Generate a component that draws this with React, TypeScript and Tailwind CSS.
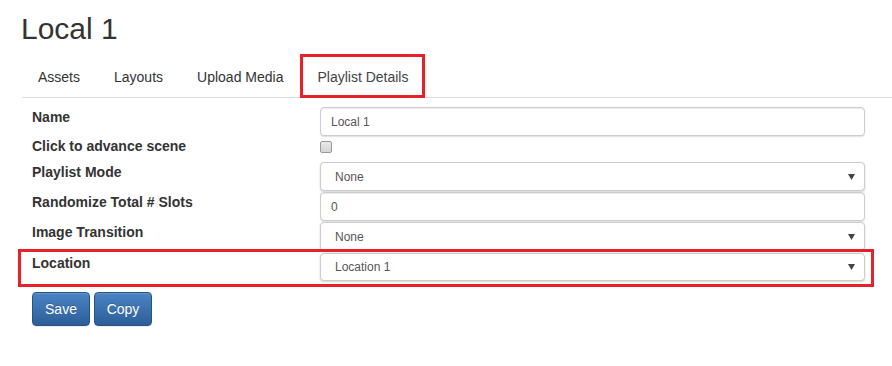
import React from "react";

const Arrow = () => (
  <svg width="7" height="6" viewBox="0 0 7 6" className="absolute right-[9px] top-1/2 -translate-y-1/2">
    <polygon points="0,0 7,0 3.5,6" fill="#444" />
  </svg>
);

const TextBox = ({ value }: { value: string }) => (
  <div className="h-full w-full rounded-[4px] border border-[#ccc] bg-white shadow-[inset_0_1px_1px_rgba(0,0,0,0.075),0_1px_1px_rgba(0,0,0,0.12)] flex items-center pl-[10px] text-[12px] text-[#555]">
    {value}
  </div>
);

const SelectBox = ({ value }: { value: string }) => (
  <div className="relative h-full w-full rounded-[4px] border border-[#ccc] bg-white shadow-[0_1px_2px_rgba(0,0,0,0.18)] flex items-center pl-[14px] text-[12px] text-[#555]">
    {value}
    <Arrow />
  </div>
);

const Row = ({
  label,
  h,
  children,
  extra,
}: {
  label: string;
  h: string;
  children: React.ReactNode;
  extra?: React.ReactNode;
}) => (
  <div className={`relative grid grid-cols-[288px_545px] ${h}`}>
    <div className="text-[14px] font-bold leading-[20px] text-[#333]">{label}</div>
    <div className="h-full">{children}</div>
    {extra}
  </div>
);

export default function App() {
  return (
    <div className="w-[892px] h-[366px] overflow-hidden bg-white font-['Liberation_Sans',Arial,sans-serif] text-[#333]">
      <div className="pl-[22px]">
        <h1 className="ml-[-1px] pt-[12px] text-[30px] leading-[33px] font-normal text-[#333]">Local 1</h1>
        <nav className="mt-[9px] flex items-end border-b border-[#ddd] text-[14px] leading-[20px] text-[#333]">
          <div className="px-[16px] py-[10px] mr-[2px]">Assets</div>
          <div className="px-[16px] py-[10px] mr-[2px]">Layouts</div>
          <div className="pl-[16px] pr-[17px] py-[10px]">Upload Media</div>
          <div className="mb-[-1px] border-[3px] border-[#e8202a] pl-[14px] pr-[14px] pt-[10px] pb-[8px] text-[#444]">
            Playlist Details
          </div>
        </nav>
        <div className="mt-[9px] pl-[10px] flex flex-col">
          <Row label="Name" h="h-[29px]">
            <TextBox value="Local 1" />
          </Row>
          <Row label="Click to advance scene" h="h-[26px]">
            <div className="mt-[5px] h-[12px] w-[12px] rounded-[2px] border border-[#999] bg-gradient-to-b from-[#e8e8e8] to-[#d4d4d4]" />
          </Row>
          <Row label="Playlist Mode" h="h-[29px] mb-[1px]">
            <SelectBox value="None" />
          </Row>
          <Row label="Randomize Total # Slots" h="h-[29px] mb-[1px]">
            <TextBox value="0" />
          </Row>
          <Row label="Image Transition" h="h-[29px] mb-[2px]">
            <SelectBox value="None" />
          </Row>
          <Row
            label="Location"
            h="h-[28px]"
            extra={
              <div className="pointer-events-none absolute left-[-14px] top-[-4px] h-[38px] w-[856px] border-[3px] border-[#e8202a]" />
            }
          >
            <SelectBox value="Location 1" />
          </Row>
          <div className="mt-[11px] flex gap-[4px]">
            <button className="h-[34px] w-[58px] rounded-[4px] border border-[#245580] bg-gradient-to-b from-[#4a84c4] to-[#2c5f99] text-[14px] text-white [text-shadow:0_-1px_0_rgba(0,0,0,0.2)] shadow-[inset_0_1px_0_rgba(255,255,255,0.15),0_1px_1px_rgba(0,0,0,0.075)]">
              Save
            </button>
            <button className="h-[34px] w-[58px] rounded-[4px] border border-[#245580] bg-gradient-to-b from-[#4a84c4] to-[#2c5f99] text-[14px] text-white [text-shadow:0_-1px_0_rgba(0,0,0,0.2)] shadow-[inset_0_1px_0_rgba(255,255,255,0.15),0_1px_1px_rgba(0,0,0,0.075)]">
              Copy
            </button>
          </div>
        </div>
      </div>
    </div>
  );
}
